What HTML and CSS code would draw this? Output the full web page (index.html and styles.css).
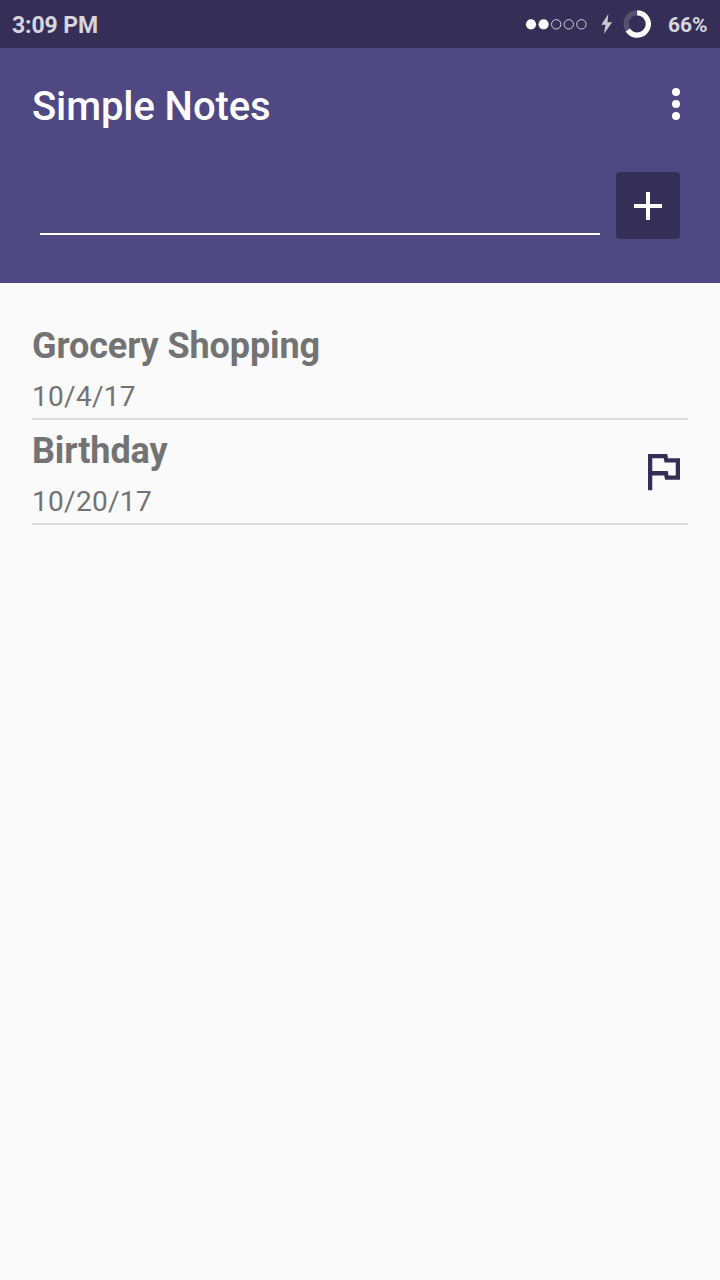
FILE: index.html
```html
<!DOCTYPE html>
<html lang="en">
<head>
<meta charset="utf-8">
<title>Simple Notes</title>
<link rel="stylesheet" href="styles.css">
</head>
<body>
<div class="status">
  <span class="clock">3:09 PM</span>
  <svg class="signal" width="62" height="12" viewBox="0 0 62 12">
    <g fill="#fff"><circle cx="6" cy="6.3" r="5.1"/><circle cx="18.6" cy="6.3" r="5.1"/></g>
    <g fill="none" stroke="#d0ced8" stroke-width="1"><circle cx="31.2" cy="6.3" r="4.7"/><circle cx="43.8" cy="6.3" r="4.7"/><circle cx="56.4" cy="6.3" r="4.7"/></g>
  </svg>
  <svg class="bolt" width="12" height="22" viewBox="0 0 12 22"><path d="M7.3 1L.3 11.7h4.2L2.9 21l8.2-11.8H6.5z" fill="#cbc9d4"/></svg>
  <svg class="battery" width="28" height="28" viewBox="0 0 28 28">
    <circle cx="14.2" cy="14" r="11.1" fill="none" stroke="#56516f" stroke-width="5.2"/>
    <path d="M14.2 2.9A11.1 11.1 0 1 1 4.86 20" fill="none" stroke="#fff" stroke-width="5.2"/>
  </svg>
  <span class="percent">66%</span>
</div>
<header class="header">
  <div class="toolbar">
    <h1 class="title">Simple Notes</h1>
    <svg class="menu" width="8" height="32" viewBox="0 0 8 32" fill="#fff"><circle cx="4" cy="4" r="4"/><circle cx="4" cy="16" r="4"/><circle cx="4" cy="28" r="4"/></svg>
  </div>
  <div class="entry">
    <div class="field"></div>
    <button class="add" aria-label="Add note"><svg width="28" height="28" viewBox="0 0 28 28"><path d="M12 0h4v12h12v4H16v12h-4V16H0v-4h12z" fill="#fff"/></svg></button>
  </div>
</header>
<main class="notes">
  <article class="note">
    <div><h2 class="name">Grocery Shopping</h2><p class="date">10/4/17</p></div>
  </article>
  <article class="note">
    <div><h2 class="name">Birthday</h2><p class="date">10/20/17</p></div>
    <svg class="flag" width="32" height="37" viewBox="5 4 15 17.3"><path d="M12.36 6l.4 2H18v6h-3.36l-.4-2H7V6h5.36M14 4H5v17h2v-7h5.6l.4 2h7V6h-5.6L14 4z" fill="#352f57"/></svg>
  </article>
</main>
</body>
</html>
```
FILE: styles.css
```css
* { box-sizing: border-box; margin: 0; padding: 0; }
body { min-height: 1280px; background: #fafafa; font-family: Roboto, sans-serif; }
svg { display: block; flex: none; }
.status { display: flex; align-items: center; height: 48px; padding: 0 12px; background: #352f57; color: #d7d5dd; }
.clock { margin-right: auto; padding-top: 4px; font-size: 23px; font-weight: 700; letter-spacing: -0.1px; line-height: 28px; }
.signal { margin-right: 13.5px; }
.bolt { margin-right: 10.5px; }
.battery { width: 28px; margin-right: 17px; }
.percent { width: 40px; padding-top: 2px; font-size: 21px; font-weight: 700; line-height: 28px; }
.header { height: 235px; background: #504883; color: #fff; }
.toolbar { display: flex; justify-content: space-between; align-items: center; height: 112px; padding: 0 40px 0 32px; }
.title { padding-top: 6px; font-size: 40px; font-weight: 500; letter-spacing: -0.1px; line-height: 48px; }
.entry { display: flex; gap: 16px; padding: 12px 40px 0; }
.field { flex: 1; height: 63px; border-bottom: 2px solid #fff; }
.add { display: flex; align-items: center; justify-content: center; width: 64px; height: 67px; border: 0; border-radius: 4px; background: #352f57; }
.notes { padding: 32px 32px 0; }
.note { display: flex; justify-content: space-between; align-items: center; height: 105px; padding: 5px 8px 0 0; border-bottom: 2px solid #dcdcdc; color: #737373; }
.name { font-size: 36px; font-weight: 700; letter-spacing: -0.1px; line-height: 46px; }
.date { padding-top: 10px; font-size: 28px; letter-spacing: 0.3px; line-height: 36px; }
.flag { margin-bottom: 3px; }
```
